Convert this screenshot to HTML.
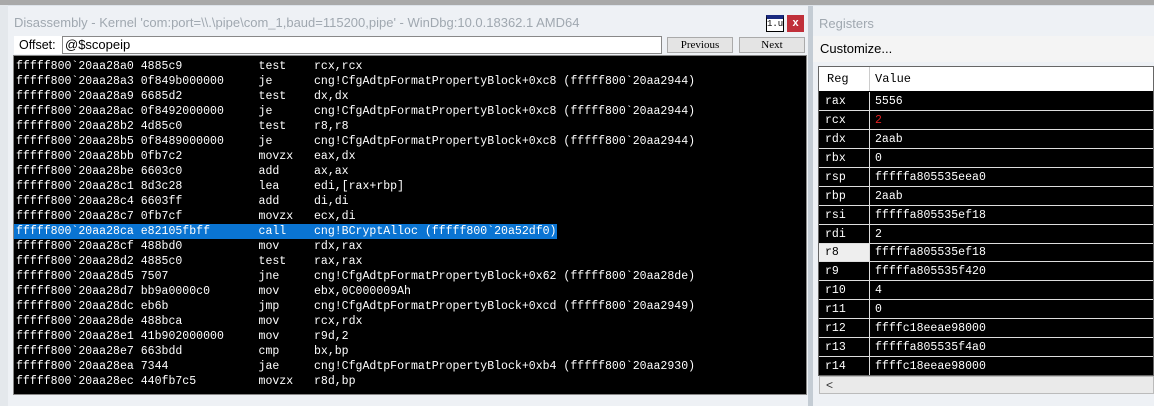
<!DOCTYPE html><html><head><style>
*{margin:0;padding:0;box-sizing:border-box}
body{width:1154px;height:406px;background:#dde3ea;position:relative;overflow:hidden;font-family:"Liberation Sans",sans-serif}
.a{position:absolute}
.mono{font-family:"Liberation Mono",monospace;font-size:11.55px;white-space:pre;color:#fff}
.r{position:absolute;left:2px;height:15px;line-height:15px}
</style></head><body>
<div class="a" style="left:0;top:0;width:1154px;height:5px;background:#a9a9a9"></div>
<div class="a" style="left:0;top:5px;width:8px;height:401px;background:#e4e8ec"></div>
<div class="a" style="left:8px;top:6px;width:800px;height:400px;background:#eef1f5"></div>
<div class="a" style="left:14px;top:15px;font-size:13px;color:#a0a8b0">Disassembly - Kernel 'com:port=\\.\pipe\com_1,baud=115200,pipe' - WinDbg:10.0.18362.1 AMD64</div>
<div class="a" style="left:766px;top:15px;width:18px;height:17px;border:1px solid #000;background:#fff;border-top:4px solid #1a2a80;font-size:9px;font-family:'Liberation Mono',monospace;text-align:center;line-height:11px">1.u</div>
<div class="a" style="left:787px;top:15px;width:17px;height:17px;background:#c0303a;color:#fff;font-size:11px;text-align:center;line-height:16px;font-weight:bold">x</div>
<div class="a" style="left:14px;top:36px;width:48px;height:18px;background:#fff;font-size:12.5px;line-height:18px;padding-left:5px">Offset:</div>
<div class="a" style="left:62px;top:36px;width:600px;height:18px;background:#fff;border:1px solid #888;font-size:13px;line-height:16px;padding-left:2px">@$scopeip</div>
<div class="a mono" style="left:667px;top:37px;width:66px;height:16px;background:#e4e4e4;border:1px solid #aaa;color:#000;text-align:center;line-height:14px;font-size:11px;font-family:'Liberation Serif',serif">Previous</div>
<div class="a mono" style="left:739px;top:37px;width:66px;height:16px;background:#e4e4e4;border:1px solid #aaa;color:#000;text-align:center;line-height:14px;font-size:11px;font-family:'Liberation Serif',serif">Next</div>
<div class="a" style="left:13px;top:55px;width:794px;height:340px;background:#000;border:1px solid #888">
<div class="mono" style="position:absolute;left:0;top:3px;width:792px">
<div class="r" style="top:0">fffff800`20aa28a0 4885c9           test    rcx,rcx</div>
<div class="r" style="top:15px">fffff800`20aa28a3 0f849b000000     je      cng!CfgAdtpFormatPropertyBlock+0xc8 (fffff800`20aa2944)</div>
<div class="r" style="top:30px">fffff800`20aa28a9 6685d2           test    dx,dx</div>
<div class="r" style="top:45px">fffff800`20aa28ac 0f8492000000     je      cng!CfgAdtpFormatPropertyBlock+0xc8 (fffff800`20aa2944)</div>
<div class="r" style="top:60px">fffff800`20aa28b2 4d85c0           test    r8,r8</div>
<div class="r" style="top:75px">fffff800`20aa28b5 0f8489000000     je      cng!CfgAdtpFormatPropertyBlock+0xc8 (fffff800`20aa2944)</div>
<div class="r" style="top:90px">fffff800`20aa28bb 0fb7c2           movzx   eax,dx</div>
<div class="r" style="top:105px">fffff800`20aa28be 6603c0           add     ax,ax</div>
<div class="r" style="top:120px">fffff800`20aa28c1 8d3c28           lea     edi,[rax+rbp]</div>
<div class="r" style="top:135px">fffff800`20aa28c4 6603ff           add     di,di</div>
<div class="r" style="top:150px">fffff800`20aa28c7 0fb7cf           movzx   ecx,di</div>
<div class="r" style="top:165px;left:0;padding-left:2px;background:#0a74d2;width:543px">fffff800`20aa28ca e82105fbff       call    cng!BCryptAlloc (fffff800`20a52df0)</div>
<div class="r" style="top:180px">fffff800`20aa28cf 488bd0           mov     rdx,rax</div>
<div class="r" style="top:195px">fffff800`20aa28d2 4885c0           test    rax,rax</div>
<div class="r" style="top:210px">fffff800`20aa28d5 7507             jne     cng!CfgAdtpFormatPropertyBlock+0x62 (fffff800`20aa28de)</div>
<div class="r" style="top:225px">fffff800`20aa28d7 bb9a0000c0       mov     ebx,0C000009Ah</div>
<div class="r" style="top:240px">fffff800`20aa28dc eb6b             jmp     cng!CfgAdtpFormatPropertyBlock+0xcd (fffff800`20aa2949)</div>
<div class="r" style="top:255px">fffff800`20aa28de 488bca           mov     rcx,rdx</div>
<div class="r" style="top:270px">fffff800`20aa28e1 41b902000000     mov     r9d,2</div>
<div class="r" style="top:285px">fffff800`20aa28e7 663bdd           cmp     bx,bp</div>
<div class="r" style="top:300px">fffff800`20aa28ea 7344             jae     cng!CfgAdtpFormatPropertyBlock+0xb4 (fffff800`20aa2930)</div>
<div class="r" style="top:315px">fffff800`20aa28ec 440fb7c5         movzx   r8d,bp</div>
</div></div>
<div class="a" style="left:808px;top:6px;width:5px;height:400px;background:#c4ccd4"></div>
<div class="a" style="left:813px;top:6px;width:341px;height:400px;background:#eef1f5"></div>
<div class="a" style="left:819px;top:16px;font-size:13px;color:#a0a8b0">Registers</div>
<div class="a" style="left:813px;top:36px;width:341px;height:26px;background:#f4f4f4"></div>
<div class="a" style="left:820px;top:41px;font-size:13px;color:#000">Customize...</div>
<div class="a" style="left:818px;top:66px;width:336px;height:310px;background:#000;border:1px solid #666;overflow:hidden">
<div class="a" style="left:0;top:0;width:336px;height:24px;background:#fff;font-size:12.5px;line-height:24px"><span class="a" style="left:8px;font-family:'Liberation Mono',monospace;font-size:12px">Reg</span><span class="a" style="left:50px;top:0;width:1px;height:24px;background:#ccc"></span><span class="a" style="left:56px;font-family:'Liberation Mono',monospace;font-size:12px">Value</span></div>
<div id="regs"></div>
</div>
<div class="a" style="left:819px;top:376px;width:335px;height:18px;background:#eaeaea;border:1px solid #bbb;font-size:12px;line-height:16px;padding-left:6px;color:#333">&lt;</div>
<script>
var d=[["rax","5556"],["rcx","2"],["rdx","2aab"],["rbx","0"],["rsp","fffffa805535eea0"],["rbp","2aab"],["rsi","fffffa805535ef18"],["rdi","2"],["r8","fffffa805535ef18"],["r9","fffffa805535f420"],["r10","4"],["r11","0"],["r12","ffffc18eeae98000"],["r13","fffffa805535f4a0"],["r14","ffffc18eeae98000"]];
var h="";d.forEach(function(x,i){var t=25+i*18.93;
h+='<div class="a mono" style="left:0;top:'+t+'px;width:336px;height:19px;border-bottom:1px solid #ddd"></div>';
if(i==8)h+='<div class="a" style="left:0;top:'+(t+1)+'px;width:50px;height:17px;background:#eee"></div>';
h+='<div class="a mono" style="left:6px;top:'+(t+2)+'px;line-height:16px;color:'+(i==8?'#000':'#fff')+'">'+x[0]+'</div>';
h+='<div class="a" style="left:50px;top:'+t+'px;width:1px;height:19px;background:#ddd"></div>';
h+='<div class="a mono" style="left:56px;top:'+(t+2)+'px;line-height:16px;color:'+(i==1?'#e02020':'#fff')+'">'+x[1]+'</div>';});
document.getElementById("regs").innerHTML=h;
</script>
</body></html>
